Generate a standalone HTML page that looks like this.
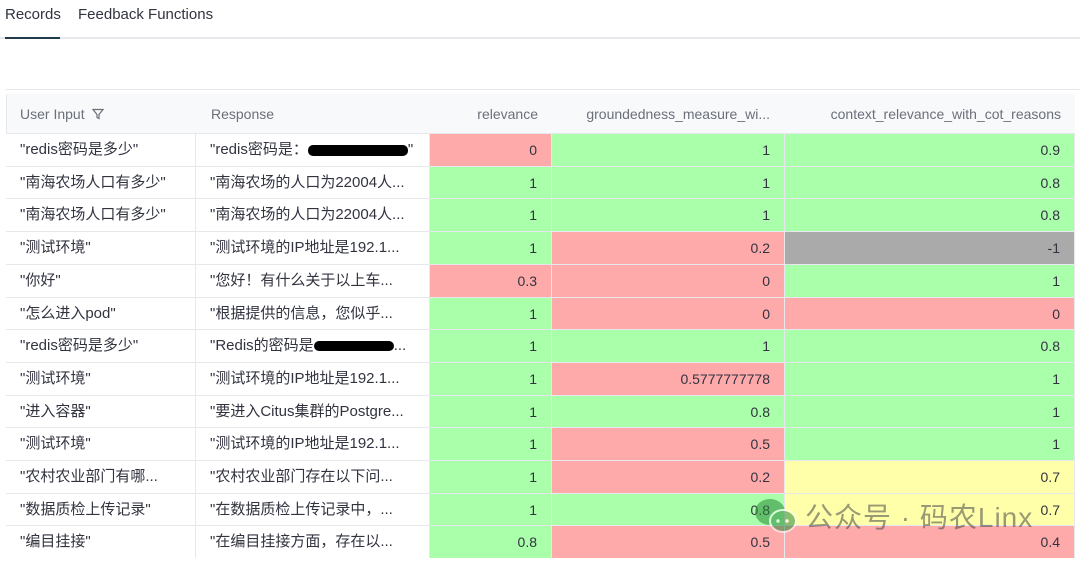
<!DOCTYPE html>
<html><head><meta charset="utf-8"><style>
*{margin:0;padding:0;box-sizing:border-box}
body{width:1080px;height:561px;overflow:hidden;background:#fff;font-family:"Liberation Sans","Noto Sans CJK SC",sans-serif;position:relative;color:#31333f}
.tab{position:absolute;top:6px;font-size:15px;color:#31333f}
.row{position:absolute;left:6px;width:1069px;height:33px;border-top:1px solid #e6e8ec}
.c{position:absolute;top:0;height:32px;line-height:32px;font-size:15px;white-space:nowrap;overflow:hidden;padding:0 14px;border-right:1px solid #e6e8ec}
.n{text-align:right;padding-right:14px;font-size:14px}
.R{background:#ffaaaa}.G{background:#aaffaa}.Y{background:#ffffaa}.X{background:#aaaaaa}
.h{color:#6b6f7a;font-size:14px}
</style></head><body>
<div class="tab" style="left:5px">Records</div>
<div class="tab" style="left:78px">Feedback Functions</div>
<div style="position:absolute;left:0;top:37px;width:1080px;height:2px;background:#e6e8ec"></div>
<div style="position:absolute;left:5px;top:37px;width:55px;height:2px;background:#1f3a4a"></div>
<div style="position:absolute;left:6px;top:89px;width:1074px;height:1px;background:#e6e8ec"></div>
<div style="position:absolute;left:6px;top:94px;width:1069px;height:39px;background:#f8f9fb;border-left:1px solid #e6e8ec"></div>
<div class="h" style="position:absolute;left:20px;top:106px">User Input&nbsp;&nbsp;<svg width="12" height="12" viewBox="0 0 12 12" style="vertical-align:-1px"><path d="M1 1.5h10L7 6.5v4L5 9.5v-3z" fill="none" stroke="#6b6f7a" stroke-width="1.2"/></svg></div>
<div class="h" style="position:absolute;left:211px;top:106px">Response</div>
<div class="h" style="position:absolute;right:542px;top:106px">relevance</div>
<div class="h" style="position:absolute;right:310px;top:106px">groundedness_measure_wi...</div>
<div class="h" style="position:absolute;right:19px;top:106px">context_relevance_with_cot_reasons</div>
<div id="t"></div>
<div style="position:absolute;left:753px;top:497px;opacity:.55"><svg width="46" height="38" viewBox="0 0 46 38"><ellipse cx="17" cy="15" rx="15" ry="13" fill="#2a8a3a"/><ellipse cx="30" cy="24" rx="13" ry="11" fill="#2a8a3a" stroke="#fff" stroke-width="2"/><circle cx="25" cy="24" r="1.7" fill="#fff"/><circle cx="34" cy="24" r="1.7" fill="#fff"/></svg></div>
<div style="position:absolute;left:805px;top:496px;font-size:28px;color:rgba(70,70,70,.55);letter-spacing:1px">公众号 · 码农Linx</div>
<script>
var d=[["\"redis密码是多少\"","\"redis密码是：<span style='display:inline-block;width:100px;height:11px;background:#000;border-radius:5px;vertical-align:middle'></span>\"","R0","G1","G0.9"],
["\"南海农场人口有多少\"","\"南海农场的人口为22004人...","G1","G1","G0.8"],
["\"南海农场人口有多少\"","\"南海农场的人口为22004人...","G1","G1","G0.8"],
["\"测试环境\"","\"测试环境的IP地址是192.1...","G1","R0.2","X-1"],
["\"你好\"","\"您好！有什么关于以上车...","R0.3","R0","G1"],
["\"怎么进入pod\"","\"根据提供的信息，您似乎...","G1","R0","R0"],
["\"redis密码是多少\"","\"Redis的密码是<span style='display:inline-block;width:80px;height:10px;background:#000;border-radius:5px;vertical-align:middle'></span>...","G1","G1","G0.8"],
["\"测试环境\"","\"测试环境的IP地址是192.1...","G1","R0.5777777778","G1"],
["\"进入容器\"","\"要进入Citus集群的Postgre...","G1","G0.8","G1"],
["\"测试环境\"","\"测试环境的IP地址是192.1...","G1","R0.5","G1"],
["\"农村农业部门有哪...","\"农村农业部门存在以下问...","G1","R0.2","Y0.7"],
["\"数据质检上传记录\"","\"在数据质检上传记录中，...","G1","G0.8","Y0.7"],
["\"编目挂接\"","\"在编目挂接方面，存在以...","G0.8","R0.5","R0.4"]];
var h="",cols=[[0,190],[190,234],[424,122],[546,233],[779,290]];
d.forEach(function(r,i){h+='<div class="row" style="top:'+(133+i*32.7)+'px">';
r.forEach(function(v,j){var c=cols[j];if(j<2){h+='<div class="c" style="left:'+c[0]+'px;width:'+c[1]+'px">'+v+'</div>'}else{h+='<div class="c n '+v[0]+'" style="left:'+c[0]+'px;width:'+c[1]+'px">'+v.slice(1)+'</div>'}});h+='</div>'});
document.getElementById('t').innerHTML=h;
</script>
</body></html>
